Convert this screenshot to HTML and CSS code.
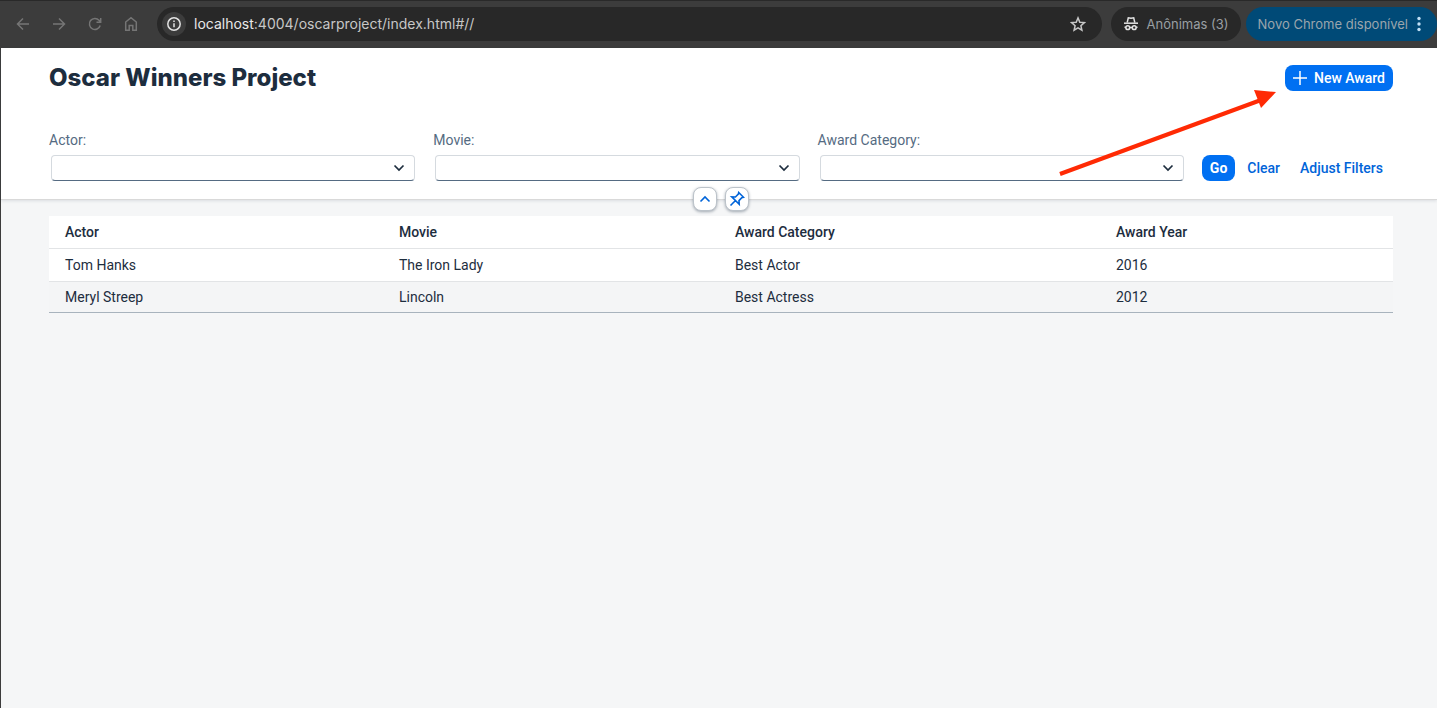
FILE: index.html
```html
<!DOCTYPE html>
<html lang="en">
<head>
<meta charset="utf-8">
<meta name="viewport" content="width=device-width, initial-scale=1">
<title>Oscar Winners Project</title>
<link rel="stylesheet" href="styles.css">
</head>
<body>
<div class="window">
  <header class="browser-bar">
    <nav class="browser-nav" aria-label="Browser">
      <button class="nav-button" type="button" aria-label="Back"><svg class="icon" viewBox="0 0 16 16"><path d="M14 8H2.500M8 2.500 2.500 8 8 13.500"/></svg></button>
      <button class="nav-button" type="button" aria-label="Forward"><svg class="icon" viewBox="0 0 16 16"><path d="M2 8h11.500M8 2.500 13.500 8 8 13.500"/></svg></button>
      <button class="nav-button" type="button" aria-label="Reload"><svg class="icon" viewBox="0 0 16 16"><path d="M13.200 9.500A5.500 5.500 0 1 1 12 4.200L13.500 5.800M13.700 2v4.200H9.500"/></svg></button>
      <button class="nav-button" type="button" aria-label="Home"><svg class="icon" viewBox="0 0 16 16"><path d="M2.700 6 8 1.700 13.300 6v8.300H9.800V9.500H6.200v4.800H2.700z"/></svg></button>
    </nav>
    <div class="omnibox">
      <button class="site-info" type="button" aria-label="Site information"><svg class="icon" viewBox="0 0 16 16"><circle cx="8" cy="8" r="6.200"/><path d="M8 7.300v4M8 4.500v1.600"/></svg></button>
      <span class="url"><span class="url-host">localhost</span>:4004/oscarproject/index.html#//</span>
      <button class="star" type="button" aria-label="Bookmark"><svg class="icon" viewBox="0 0 16 16"><path d="m8 1.900 1.800 4.300 4.600.4-3.500 3.100 1 4.500L8 11.800l-3.900 2.400 1-4.500-3.500-3.100 4.600-.4z"/></svg></button>
    </div>
    <button class="incognito" type="button">
      <svg class="icon incognito-icon" viewBox="0 0 16 16"><path d="M4.200 6.500 5.300 1.800 8 2.300l2.700-.5 1.100 4.700"/><path d="M1 7.200h14"/><circle cx="4.800" cy="11.700" r="1.900"/><circle cx="11.200" cy="11.700" r="1.900"/><path d="M1.500 11.200h1.400M6.700 11.400h2.600M13.100 11.200h1.400"/></svg>
      Anônimas (3)
    </button>
    <button class="update" type="button">
      Novo Chrome disponível
      <svg class="dots" viewBox="0 0 4 16"><circle cx="2" cy="2.500" r="1.700"/><circle cx="2" cy="8" r="1.700"/><circle cx="2" cy="13.500" r="1.700"/></svg>
    </button>
  </header>

  <main class="app">
    <section class="page-header">
      <div class="title-row">
        <h1 class="title">Oscar Winners Project</h1>
        <div class="new-award-wrap">
          <button class="button button-primary" type="button"><svg class="plus" viewBox="0 0 14 14"><path d="M7 0v14M0 7h14"/></svg>New Award</button>
          <svg class="arrow" viewBox="0 0 220 90" aria-hidden="true"><path class="arrow-line" d="M3 86 204 12"/><path class="arrow-head" d="m219 4-22-2 7 18z"/></svg>
        </div>
      </div>
      <form class="filters">
        <div class="field">
          <label class="label" for="actor">Actor:</label>
          <div class="select-wrap"><select class="select" id="actor"><option></option></select><svg class="chevron" viewBox="0 0 12 8"><path d="m1.500 1.500 4.500 4.500 4.500-4.500"/></svg></div>
        </div>
        <div class="field">
          <label class="label" for="movie">Movie:</label>
          <div class="select-wrap"><select class="select" id="movie"><option></option></select><svg class="chevron" viewBox="0 0 12 8"><path d="m1.500 1.500 4.500 4.500 4.500-4.500"/></svg></div>
        </div>
        <div class="field">
          <label class="label" for="category">Award Category:</label>
          <div class="select-wrap"><select class="select" id="category"><option></option></select><svg class="chevron" viewBox="0 0 12 8"><path d="m1.500 1.500 4.500 4.500 4.500-4.500"/></svg></div>
        </div>
        <div class="actions">
          <button class="button button-primary button-go" type="button">Go</button>
          <button class="button button-link" type="button">Clear</button>
          <button class="button button-link" type="button">Adjust Filters</button>
        </div>
      </form>
      <div class="header-toggles">
        <button class="toggle" type="button" aria-label="Collapse header"><svg class="toggle-icon" viewBox="0 0 16 16"><path d="m3.500 10.500 4.500-4.500 4.500 4.500"/></svg></button>
        <button class="toggle" type="button" aria-label="Pin header"><svg class="toggle-icon" viewBox="0 0 16 16"><path d="m9.700 1.500 4.800 4.800-1.700.4-2.800 2.900.2 3.600-7.400-7.400 3.600.2 2.900-2.800zM6.500 9.500l-5 5"/></svg></button>
      </div>
    </section>
    <section class="content">
      <table class="awards">
        <colgroup><col class="col-actor"><col class="col-movie"><col class="col-category"><col></colgroup>
        <thead><tr><th scope="col">Actor</th><th scope="col">Movie</th><th scope="col">Award Category</th><th scope="col">Award Year</th></tr></thead>
        <tbody>
          <tr><td>Tom Hanks</td><td>The Iron Lady</td><td>Best Actor</td><td>2016</td></tr>
          <tr><td>Meryl Streep</td><td>Lincoln</td><td>Best Actress</td><td>2012</td></tr>
        </tbody>
      </table>
    </section>
  </main>
</div>
</body>
</html>
```

FILE: styles.css
```css
* { box-sizing: border-box; }
body { margin: 0; background: #f5f6f7; color: #1d2d3e; font: 14px/20px Roboto, sans-serif; }
button { margin: 0; padding: 0; border: 0; background: none; color: inherit; font: inherit; white-space: nowrap; }
svg { display: block; flex: none; fill: none; stroke: currentColor; }
.window { display: flex; flex-direction: column; min-height: 100vh; }

.browser-bar { display: flex; align-items: center; height: 48px; background: #3c3c3c; box-shadow: inset 0 1px #292929; color: #c7c7c7; font: 14px/20px Inter, sans-serif; }
.browser-nav { display: flex; gap: 20px; padding: 0 18px 0 15px; color: #757575; }
.icon { width: 16px; height: 16px; stroke-width: 1.5; }
.omnibox { display: flex; flex: 1; align-items: center; height: 34px; margin-right: 9px; padding: 0 16px 0 5px; border-radius: 17px; background: #282828; }
.site-info { display: grid; place-items: center; width: 24px; height: 24px; margin-right: 8px; border-radius: 50%; background: #3c3c3c; color: #e3e3e3; }
.url { flex: 1; }
.url-host { color: #e8e8e8; }
.incognito { display: flex; align-items: center; gap: 8px; height: 34px; margin-right: 5px; padding: 0 12px; border-radius: 17px; background: #282828; color: #9a9fa3; font-size: 13px; }
.incognito-icon { color: #e3e3e3; }
.update { display: flex; align-items: center; gap: 9px; height: 34px; padding: 0 16px 0 12px; border-radius: 17px; background: #004a77; color: #9aa5ad; font-size: 13px; }
.dots { width: 4px; height: 16px; fill: #c2e0f5; stroke: none; }

.app { flex: 1; border-left: 1px solid #3c3c3c; }
.page-header { position: relative; padding: 16px 44px 18px 48px; background: #fff; border-bottom: 1px solid #d9d9d9; box-shadow: 0 1px 3px rgb(34 53 72 / 12%); }
.title-row { display: flex; align-items: center; justify-content: space-between; height: 28px; }
.title { margin: 0; font: 800 24px/28px Inter, sans-serif; }
.new-award-wrap { position: relative; }
.button { display: flex; align-items: center; justify-content: center; height: 26px; padding: 0 8px; border-radius: 8px; font-weight: 500; }
.button-primary { background: #0070f2; color: #fff; }
.button-go { font-weight: 700; }
.button-link { padding: 0 10px; color: #0064d9; }
.plus { width: 14px; height: 14px; margin-right: 7px; stroke-width: 1.5; }
.arrow { position: absolute; z-index: 1; top: 23px; right: 116px; width: 220px; height: 90px; pointer-events: none; }
.arrow-line { stroke: #ff2a04; stroke-width: 4; }
.arrow-head { fill: #ff2a04; stroke: none; }

.filters { display: flex; align-items: flex-end; padding-top: 38px; }
.field { flex: 1; min-width: 0; }
.label { display: block; height: 25px; color: #556b82; }
.select-wrap { position: relative; margin: 0 18px 0 2px; }
.select { display: block; width: 100%; height: 26px; appearance: none; border: 1px solid #d5dadf; border-bottom-color: #556b82; border-radius: 4px; background: #fff; color: inherit; font: inherit; }
.chevron { position: absolute; top: 9px; right: 10px; width: 12px; height: 8px; stroke-width: 1.7; pointer-events: none; }
.actions { display: flex; }
.button-go { margin-right: 2px; }
.header-toggles { position: absolute; bottom: -12px; left: 0; right: 0; display: flex; justify-content: center; gap: 8px; padding-left: 4px; }
.toggle { display: grid; place-items: center; width: 24px; height: 24px; border: 1px solid #bcc3ca; border-radius: 8px; background: #fff; color: #0064d9; box-shadow: 0 1px 3px rgb(34 53 72 / 40%); }
.toggle-icon { width: 16px; height: 16px; stroke-width: 1.6; }

.content { padding: 16px 44px 16px 48px; }
.awards { width: 100%; border-collapse: separate; border-spacing: 0; table-layout: fixed; background: #fff; border-bottom: 1px solid #a8b3bd; }
.awards th, .awards td { height: 30px; padding: 0 16px; text-align: left; vertical-align: middle; }
.awards th { height: 33px; border-bottom: 1px solid #e2e4e6; font-weight: 500; }
.awards tbody tr:first-child td { height: 33px; border-bottom: 1px solid #e2e4e6; }
.awards tbody tr:nth-child(even) { background: #f4f5f6; }
.col-actor { width: 24.85%; }
.col-movie { width: 25%; }
.col-category { width: 28.35%; }
```
